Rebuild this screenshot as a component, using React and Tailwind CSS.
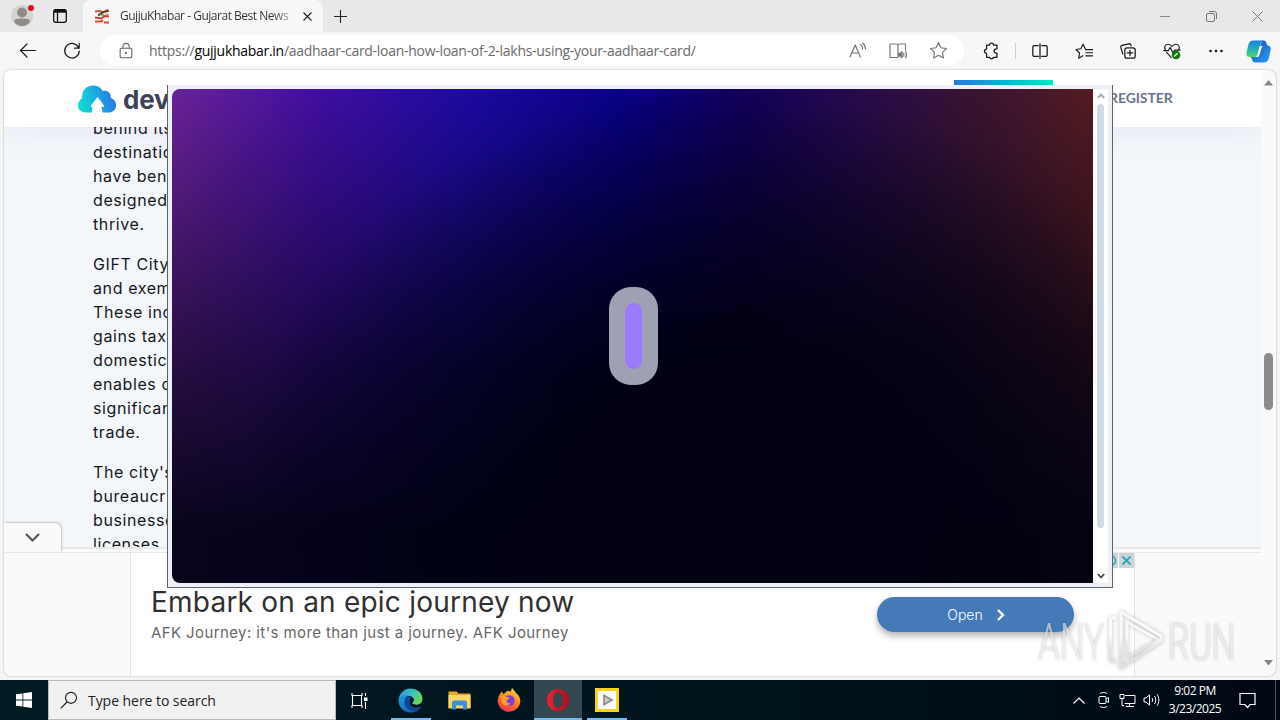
import clsx from "clsx";

const segoe = "font-['Open_Sans',sans-serif]";

const Icon = ({ size = 20, className, children }) => (
  <svg
    width={size}
    height={size}
    viewBox="0 0 20 20"
    fill="none"
    stroke="currentColor"
    strokeWidth="1.2"
    strokeLinecap="round"
    strokeLinejoin="round"
    className={clsx("shrink-0", className)}
  >
    {children}
  </svg>
);

const TabStrip = () => (
  <div className="flex h-8 bg-[#e8e8e8] text-[#1b1b1b]">
    <div className="flex w-[44px] items-center justify-center">
      <svg width="24" height="24" viewBox="0 0 24 24">
        <circle cx="12" cy="12" r="11" fill="#d6d4d2" />
        <circle cx="12" cy="8.5" r="5" fill="#8f8b88" />
        <path d="M4 17.500c0-1.800 2-3 8-3s8 1.200 8 3c-1.600 2.800-4.500 4.500-8 4.500s-6.400-1.700-8-4.500z" fill="#8f8b88" />
        <circle cx="21" cy="4" r="3" fill="#e00b1c" />
      </svg>
    </div>
    <div className="flex w-[39px] items-center pl-2">
      <svg width="16" height="16" viewBox="0 0 16 16" fill="none" stroke="#111" strokeWidth="1.3">
        <rect x="1.700" y="1.700" width="12.600" height="12.600" rx="2" />
        <path d="M2 3.200h12" strokeWidth="3" />
        <path d="M5.500 4v10" />
      </svg>
    </div>
    <div className="flex w-[240px] items-center rounded-t-lg bg-[#f7f7f7] pl-[11px]">
      <svg width="16" height="16" viewBox="0 0 16 16" fill="none">
        <path d="M1 3.500l5-.5 3 1.500 5-3" stroke="#cf5a45" strokeWidth="2" />
        <path d="M4 7.500l5-3.500 6-1" stroke="#5a2f2a" strokeWidth="1.600" />
        <path d="M1 9.500l6 1 4-2.500 4 .5" stroke="#c8402f" strokeWidth="2" />
        <path d="M6 6.500l4 .8" stroke="#4c8f68" strokeWidth="1.600" />
        <path d="M1 13.500h6l2-1.500M10 14.500h5" stroke="#d9482f" strokeWidth="2" />
        <path d="M11 6l4 .5" stroke="#e8a08e" strokeWidth="1.500" />
      </svg>
      <span
        className={clsx(
          segoe,
          "ml-[10px] w-[173px] whitespace-nowrap bg-linear-to-r from-[#333] from-88% to-[#33333350] bg-clip-text text-xs tracking-[-0.48px] text-transparent",
        )}
      >
        GujjuKhabar - Gujarat Best News
      </span>
      <svg width="9" height="9" viewBox="0 0 9 9" stroke="#222" strokeWidth="1.100" className="ml-[10px]">
        <path d="M.5.5l8 8M8.500.5l-8 8" />
      </svg>
    </div>
    <div className="flex w-[35px] items-center justify-center">
      <svg width="13" height="13" viewBox="0 0 13 13" stroke="#222" strokeWidth="1.100">
        <path d="M6.500 0v13M0 6.500h13" />
      </svg>
    </div>
    <div className="ml-auto flex text-[#777]">
      <div className="flex w-[46px] items-center justify-center">
        <span className="h-px w-[10px] bg-[#8a8a8a]" />
      </div>
      <div className="flex w-[46px] items-center justify-center">
        <svg width="11" height="11" viewBox="0 0 11 11" fill="none" stroke="currentColor">
          <rect x=".5" y="2.500" width="8" height="8" rx="1.500" />
          <path d="M3 .5h5.500a2 2 0 0 1 2 2v5.500" />
        </svg>
      </div>
      <div className="flex w-[46px] items-center justify-center">
        <svg width="11" height="11" viewBox="0 0 11 11" stroke="currentColor">
          <path d="M.5.5l10 10M10.500.5l-10 10" />
        </svg>
      </div>
    </div>
  </div>
);

const ToolButton = ({ children }) => (
  <div className="flex w-11 items-center justify-center">{children}</div>
);

const Toolbar = () => (
  <div className="flex h-[38px] bg-[#f7f7f7] text-[#1b1b1b]">
    <div className="flex w-[100px] pl-[6px]">
      <ToolButton>
        <Icon>
          <path d="M17.500 9.500h-15M9 3L2.500 9.500L9 16" />
        </Icon>
      </ToolButton>
      <ToolButton>
        <Icon>
          <path d="M16.800 7A7.300 7.300 0 1 0 17.300 10M17.200 2.500v4.700h-4.700" />
        </Icon>
      </ToolButton>
    </div>
    <div className="mt-[3px] flex h-[31px] w-[864px] items-center rounded-full bg-white pl-[17px]">
      <Icon size={18} className="text-[#666]">
        <rect x="3.500" y="7" width="13" height="10.500" rx="1.500" />
        <path d="M6.500 7V5a3.500 3.500 0 0 1 7 0v2" />
        <circle cx="10" cy="12.200" r=".6" fill="currentColor" />
      </Icon>
      <span className={clsx(segoe, "ml-[14px] mt-px w-[685px] whitespace-nowrap text-sm tracking-[-0.285px] text-[#6b6b6b]")}>
        https://<span className="text-black">gujjukhabar.in</span>
        /aadhaar-card-loan-how-loan-of-2-lakhs-using-your-aadhaar-card/
      </span>
      <div className="flex text-[#777]">
        <div className="flex w-10 justify-center pl-2">
          <Icon>
            <path d="M2 16L7.200 4l5.200 12M4 12h6.500M12.500 3.500c1.500 1 2 2.500 2 4.500M14.500 2c2 1.500 3 3.500 3 6" />
          </Icon>
        </div>
        <div className="flex w-10 justify-center pl-2">
          <Icon>
            <path d="M10 3.500v13M9 16.500H2V3h6c1.200 0 2 .5 2 1.200C10 3.500 10.800 3 12 3h5.500v6" />
            <path d="M10.500 12.500h1.500l2-1.800v6l-2-1.700h-1.500z" fill="currentColor" />
            <path d="M15.800 12v3.500M17.800 10.500c.8 2 .8 4.500 0 6.500" />
          </Icon>
        </div>
        <div className="flex w-10 justify-center pl-2">
          <Icon size={19}>
            <path d="M10 1.800l2.600 5.300 5.800.8-4.200 4.100 1 5.800-5.200-2.800-5.200 2.800 1-5.800-4.200-4.100 5.800-.8z" />
          </Icon>
        </div>
      </div>
    </div>
    <div className="flex pb-[6px] pl-[6px]">
      <ToolButton>
        <Icon size={18} className="translate-y-[3px]">
          <path
            d="M4 3.500h3.200a2.300 2.300 0 0 1 4.600 0H15.500v4.200h-.7a2.400 2.400 0 0 0 0 4.800h.7v4.500h-3.800a2.300 2.300 0 0 1-4.400 0H4v-4.300a2.400 2.400 0 1 1 0-4.800z"
            strokeWidth="1.400"
          />
        </Icon>
      </ToolButton>
      <div className="ml-px mr-[2px] mt-[11px] h-4 w-px bg-[#cfcfcf]" />
      <ToolButton>
        <Icon size={18} className="translate-y-[3px]">
          <path d="M8 4H3.500A1.500 1.500 0 0 0 2 5.500v9A1.500 1.500 0 0 0 3.500 16H8M12 4h4.500A1.500 1.500 0 0 1 18 5.500v9a1.500 1.500 0 0 1-1.500 1.500H12M10 2v16" strokeWidth="1.400" />
        </Icon>
      </ToolButton>
      <ToolButton>
        <Icon size={19} className="translate-y-[3px]">
          <path d="M10.800 7.200L8.500 2.300 6.200 7.100l-5.200.8 3.800 3.700-.9 5.400L8.300 14.600M11 8h7.500M11.500 11.300h7M11.500 14.600h7" />
        </Icon>
      </ToolButton>
      <ToolButton>
        <Icon size={18} className="translate-y-[3px]">
          <rect x="6.500" y="6.500" width="11.500" height="11.500" rx="2.500" strokeWidth="1.400" />
          <path d="M12.200 9.200v6M9.200 12.200h6M4.200 13.500L2 6A2 2 0 0 1 3.300 3.700L11 2a2 2 0 0 1 2.300 1.500l.3.900" strokeWidth="1.400" />
        </Icon>
      </ToolButton>
      <ToolButton>
        <Icon size={18} className="translate-y-[3px]">
          <path d="M2.500 8.500C.8 5 3 2.500 5.500 2.500c2 0 3.500 1 4.500 2.500 1-1.500 2.500-2.500 4.500-2.500 2.500 0 4.500 2.500 3.200 5.500M4 11.500l5 5.500M1 9.500h5l2-3.500 3 6 2-3h6" strokeWidth="1.300" />
          <circle cx="14.500" cy="14.500" r="4.800" fill="#107c10" stroke="none" />
          <path d="M12.500 15.800l3.500-3" stroke="white" />
        </Icon>
      </ToolButton>
      <ToolButton>
        <Icon className="translate-y-[3px]">
          <g fill="currentColor" stroke="none">
            <circle cx="4.500" cy="10" r="1.300" />
            <circle cx="10" cy="10" r="1.300" />
            <circle cx="15.500" cy="10" r="1.300" />
          </g>
        </Icon>
      </ToolButton>
      <div className="flex w-10 items-center justify-center">
        <svg width="25" height="23" viewBox="0 0 25 23" className="translate-y-[3px]">
          <defs>
            <linearGradient id="copA" x1="0" y1="0" x2="0" y2="1">
              <stop offset="0" stopColor="#1780e0" />
              <stop offset=".5" stopColor="#1fb0b8" />
              <stop offset="1" stopColor="#52d86a" />
            </linearGradient>
            <linearGradient id="copB" x1="0" y1="0" x2="1" y2="1">
              <stop offset="0" stopColor="#184fae" />
              <stop offset="1" stopColor="#2a9ff5" />
            </linearGradient>
          </defs>
          <path d="M16 .5h1.500c2 0 2.800 1.500 3.200 3.200.3 1.300 1 1.800 2 2 1.800.5 2.300 2.300 1.900 4.500l-1.800 8c-.7 3-2.300 4.300-5 4.300H9.500c-2.200 0-3-1.300-3.500-3.300-.3-1-.8-1.700-1.500-2.200h4c1.600 0 2.200-1 2.600-2.500z" fill="url(#copB)" />
          <path d="M7.500.5h9.800c-1.500.3-2.300 1.600-2.800 3.500L11.800 13c-.6 2.600-1.700 4-4 4H3.500C.8 17 0 15 .6 12.500l1.700-7.700C3 2 4.800.5 7.500.5z" fill="url(#copA)" />
          <path d="M14.200 6h3.200c-1 0-1.500 1-2 2.500l-1.700 6c-.5 1.500-1 2.300-2.200 2.500H9.700c1-.5 1.400-1.300 1.800-2.500l1.500-6c.3-1.200.5-2 1.200-2.500z" fill="#eefaff" />
        </svg>
      </div>
    </div>
  </div>
);

const article = [
  ["behind its", "destination", "have ben", "designed", "thrive."],
  ["GIFT City", "and exem", "These inc", "gains tax", "domestic", "enables c", "significan", "trade."],
  ["The city's", "bureaucr", "businesse", "licenses, a"],
];

const Site = () => (
  <div className="flex h-[477px] flex-col overflow-hidden bg-[#f4f7fa]">
    <div className="z-10 flex h-[57px] shrink-0 bg-white shadow-[0_10px_30px_rgba(90,90,180,0.07)]">
      <div className="flex items-start pl-[74px] pt-[15px]">
        <svg width="39" height="28" viewBox="0 0 39 28">
          <defs>
            <linearGradient id="cloud" x1="0" y1=".7" x2="1" y2=".5">
              <stop offset="0" stopColor="#0fe0d0" />
              <stop offset="1" stopColor="#2a72ec" />
            </linearGradient>
          </defs>
          <path
            d="M8 27.500C3 27.500 0 24.500 0 20.500c0-3 1.500-5.500 4-7C3.500 5.500 8.500.5 15 .5c4.500 0 8 2 9.800 5.500 4.500-.8 8.500 2 8 7 3.500 1.500 5.500 4 5.200 8-.4 4-3.200 6.500-7.500 6.500h-6l-1-5.500c2 .3 3 0 2.500-1.500L19.500 12l-6.500 8.500c-.5 1.500 0 2 1.500 1.500l-.5 5.500z"
            fill="url(#cloud)"
          />
        </svg>
        <span className="ml-[6px] font-[Inter,sans-serif] text-[26px] font-bold leading-[30px] tracking-[-0.2px] text-[#3d4257]">
          dev
        </span>
      </div>
      <div className="ml-auto flex">
        <div className="mt-[10px] h-[5px] w-[99px] bg-linear-to-r from-[#2577dc] to-[#0be4c4]" />
        <span className="ml-[56px] mt-[18px] w-[152px] font-[Lato,sans-serif] text-[14px] font-bold leading-5 tracking-[-0.08px] text-[#6a7391]">
          REGISTER
        </span>
      </div>
    </div>
    <div className="-mt-[11px] flex flex-col gap-4 pl-[89px] font-[Inter,sans-serif] text-[16px] leading-6 text-[#16181d]">
      {article.map((lines, i) => (
        <div key={i}>
          {lines.map((line) => (
            <p key={line} className="whitespace-nowrap tracking-[0.6px]">
              {line}
            </p>
          ))}
        </div>
      ))}
    </div>
  </div>
);

const AdBanner = () => (
  <div className="flex h-[129px] flex-col bg-[#fafafa]">
    <div className="h-[6px] border-t-2 border-b border-t-[#e6e8ea] border-b-[#e9e9e9]" />
    <div className="flex grow">
      <div className="w-[126px]" />
      <div className="relative flex w-[1005px] justify-between border-x border-[#e3e3e3] bg-white">
        <div className="pl-5 pt-[32px] font-[Inter,sans-serif]">
          <h2 className="whitespace-nowrap text-[28px] leading-[34px] tracking-[0.22px] text-[#303030]">
            Embark on an epic journey now
          </h2>
          <p className="mt-[4px] whitespace-nowrap text-[15px] leading-5 tracking-[0.4px] text-[#686868]">
            AFK Journey: it's more than just a journey. AFK Journey
          </p>
        </div>
        <div className="mr-[60px] mt-[44px] flex h-[35px] w-[197px] items-center justify-center rounded-full bg-[#457ab8] pl-px text-white shadow-[0_4px_7px_rgba(0,0,0,0.3)]">
          <span className="font-[Inter,sans-serif] text-[14px] font-light">Open</span>
          <svg width="8" height="12" viewBox="0 0 8 12" fill="none" stroke="white" strokeWidth="2.400" className="ml-[14px]">
            <path d="M1 1l5 5-5 5" />
          </svg>
        </div>
        <div className="absolute right-0 top-0 flex gap-px">
          <div className="h-[15px] w-[15px] bg-[#ccd3d6] pl-[3px]">
            <svg width="12" height="15" viewBox="0 0 12 15" fill="none" stroke="#25a4ba" strokeWidth="1.500">
              <circle cx="5" cy="7.500" r="4.500" />
            </svg>
          </div>
          <div className="flex h-[15px] w-[15px] items-center justify-center bg-[#ccd3d6]">
            <svg width="9" height="9" viewBox="0 0 9 9" stroke="#25a4ba" strokeWidth="1.700">
              <path d="M.5.5l8 8M8.500.5l-8 8" />
            </svg>
          </div>
        </div>
      </div>
    </div>
  </div>
);

const Popup = () => (
  <div className="absolute left-[167px] top-[85px] z-20 flex h-[503px] w-[946px] border border-t-0 border-[#5c6468] bg-[#edf0f7] p-1">
    <div className="flex h-[494px] w-[921px] items-center justify-center rounded-l-lg bg-[radial-gradient(ellipse_54%_84%_at_61%_84%,#000010_30%,#00001000),linear-gradient(180deg,#00021000,#00021066_35%,#000210a6_58%,#000210eb_90%),linear-gradient(90deg,#6a2298_0%,#400ea0_16%,#1c0aa0_32%,#080084_49%,#12005c_62%,#260a4c_74%,#3a1430_88%,#541b22_100%)] pl-px">
      <div className="flex h-[98px] w-[49px] items-center justify-center rounded-[22px] bg-[#a0a0b4]">
        <div className="h-[66px] w-[17px] rounded-full bg-[#9a7bff]" />
      </div>
    </div>
    <div className="flex h-[494px] w-[15px] flex-col items-center bg-white py-1">
      <svg width="8" height="6" viewBox="0 0 8 6" fill="none" stroke="#b5aeb0" strokeWidth="2">
        <path d="M.8 5L4 1.500 7.200 5" />
      </svg>
      <div className="mt-[5px] h-[424px] w-[7px] rounded-full bg-[#d0dbe5]" />
      <svg width="8" height="6" viewBox="0 0 8 6" fill="none" stroke="#444" strokeWidth="1.800" className="mt-auto">
        <path d="M.8 1L4 4.500 7.200 1" />
      </svg>
    </div>
  </div>
);

const Watermark = () => (
  <div className="absolute left-[1038px] top-[608px] z-30 flex h-16 w-[196px] items-center justify-between font-[Roboto,sans-serif] text-[51px] font-light leading-none text-white/60 [text-shadow:0_0_3px_rgba(0,0,0,0.25)]">
    <span className="w-[66px] origin-left translate-y-[2px] scale-x-[0.68] whitespace-nowrap">ANY</span>
    <svg width="58" height="64" viewBox="0 0 58 64" fill="none" className="drop-shadow-[0_0_2px_rgba(0,0,0,0.3)]">
      <defs>
        <linearGradient id="mark" x1="0" y1="0" x2="0" y2="1">
          <stop offset=".4" stopColor="white" />
          <stop offset=".75" stopColor="#e2e2e2" />
        </linearGradient>
      </defs>
      <g stroke="url(#mark)" strokeOpacity=".85" strokeLinejoin="round">
        <path d="M9 9L3.500 11v41l5.500 2" strokeWidth="3" />
        <path d="M14 4v52M14 4l40 24v5L14 60v-8" strokeWidth="3" />
        <path d="M20 50V14l32 18z" strokeWidth="2.500" />
      </g>
    </svg>
    <span className="w-[66px] origin-left translate-y-[2px] scale-x-[0.66] whitespace-nowrap">RUN</span>
  </div>
);

const TaskApp = ({ active, open, children }) => (
  <div
    className={clsx(
      "flex h-10 flex-col items-center border-b-2",
      active ? "ml-px w-12 border-[#76b9ed] bg-[#334850]" : "w-[49px] border-transparent",
    )}
  >
    <div className="flex h-[38px] shrink-0 items-center pt-[2px]">{children}</div>
    {open && <div className="h-[2px] w-10 shrink-0 bg-[#76b9ed]" />}
  </div>
);

const Taskbar = () => (
  <div className="flex h-10 bg-linear-to-r from-[#001a22] via-[#00141c] via-60% to-[#000814] text-white">
    <div className="flex w-12 items-center justify-center">
      <svg width="16" height="16" viewBox="0 0 16 16" fill="white">
        <path d="M0 2.300l6.500-.9v6.200H0zM7.300 1.300L16 0v7.600H7.300zM0 8.400h6.500v6.200L0 13.700zM7.300 8.400H16V16l-8.700-1.300z" />
      </svg>
    </div>
    <div className="flex w-[288px] items-center border border-[#b9b9b9] bg-[#f1f1f1] pl-[11px] text-[#222]">
      <svg width="18" height="18" viewBox="0 0 18 18" fill="none" stroke="#222" strokeWidth="1.200">
        <circle cx="11" cy="6.800" r="5.500" />
        <path d="M7 11l-6.300 6.300" />
      </svg>
      <span className={clsx(segoe, "ml-[10px] mt-[1px] whitespace-nowrap text-[14px] tracking-[-0.05px]")}>
        Type here to search
      </span>
    </div>
    <div className="flex w-[50px] items-center justify-center pr-[3px]">
      <svg width="17" height="17" viewBox="0 0 17 17" fill="none" stroke="white" strokeWidth="1.100">
        <path d="M1 1v2.500h10V1M1 16v-2.500h10V16M1.500 3.500v10M10.500 3.500v10M14.500 1v3M14.500 10v7" />
        <rect x="13.500" y="6" width="2.500" height="2.500" fill="white" />
      </svg>
    </div>
    <TaskApp open>
      <svg width="25" height="25" viewBox="0 0 24 24">
        <defs>
          <linearGradient id="edgeTop" x1="0" y1="0" x2="1" y2=".5">
            <stop offset="0" stopColor="#2390d8" />
            <stop offset=".6" stopColor="#38c4b8" />
            <stop offset="1" stopColor="#6ad85a" />
          </linearGradient>
          <linearGradient id="edgeLow" x1="0" y1="0" x2="1" y2="1">
            <stop offset="0" stopColor="#1b9de2" />
            <stop offset="1" stopColor="#0f57ad" />
          </linearGradient>
        </defs>
        <path d="M.5 11C1.500 4.500 6.500.5 12 .5c6.500 0 11.500 4.500 11.500 10 0 3.500-2.800 5.500-6 5.500-3 0-4.500-1-3-2.500 2.500-3-1-6-5-6-4 0-7 1.500-9 3.500z" fill="url(#edgeTop)" />
        <path d="M.5 11c2-3.500 6-5 9.500-3.500C7 9 6 12 7 15c1.500 4.500 7.500 6.500 15 3-2.500 4-6 5.600-10 5.600C5.500 23.600 0 18 .5 11z" fill="url(#edgeLow)" />
        <path d="M10 8c-4 1.500-5 7-2 11 2.500 3 7 4 10 3 2-1 3.500-2.500 4.200-4-5.200 2-9.200 0-10.700-3-.8-2 .5-3.500.5-5 0-1-.8-1.800-2-2z" fill="#0b4a92" />
      </svg>
    </TaskApp>
    <TaskApp>
      <svg width="23" height="20" viewBox="0 0 23 20">
        <path d="M.5 1.500h8l2 2h12V18H.5z" fill="#e8a92e" />
        <path d="M.5 5h22v13.500H.5z" fill="#fbd76a" />
        <path d="M4 19.500v-7a2 2 0 0 1 2-2h11a2 2 0 0 1 2 2v7h-4v-4H8v4z" fill="#3f8fd0" />
      </svg>
    </TaskApp>
    <TaskApp>
      <svg width="24" height="24" viewBox="0 0 24 24">
        <defs>
          <linearGradient id="fox" x1=".8" y1="0" x2=".3" y2="1">
            <stop offset="0" stopColor="#ffe14a" />
            <stop offset=".45" stopColor="#ff8a1f" />
            <stop offset="1" stopColor="#f02c55" />
          </linearGradient>
        </defs>
        <path d="M3 6l1.500-2.500L6.500 6l3-2.500C10.500 2.500 12 2 13.500 4L15 0c2 2 3 3.500 4 5 3 2 4.300 5 4.300 8A11.200 11.200 0 0 1 12 23.800 11.200 11.200 0 0 1 .8 13C.8 10 1.500 8 3 6z" fill="url(#fox)" />
        <circle cx="12.500" cy="12.500" r="5.200" fill="#7a3fd6" />
        <path d="M3 8c3-1 5 0 6.500 1 2 0 3 .5 3 1.500-1 1-3 1-3 2.500s2 2.500 4 2c-2 3.500-7 3-8.500 0C4 13 4 11 3 8z" fill="#ff9a22" />
      </svg>
    </TaskApp>
    <TaskApp active>
      <svg width="24" height="24" viewBox="0 0 24 24">
        <defs>
          <linearGradient id="opera" x1="0" y1="0" x2="1" y2="0">
            <stop offset="0" stopColor="#f31f33" />
            <stop offset="1" stopColor="#a8101c" />
          </linearGradient>
        </defs>
        <path
          d="M12 1a11 11 0 1 0 0 22 11 11 0 1 0 0-22zM12 4c2.800 0 4.800 3.500 4.800 8s-2 8-4.800 8-4.800-3.500-4.800-8S9.200 4 12 4z"
          fill="url(#opera)"
          fillRule="evenodd"
        />
      </svg>
    </TaskApp>
    <TaskApp open>
      <svg width="24" height="24" viewBox="0 0 24 24">
        <rect x="1.500" y="1.500" width="21" height="21" fill="#fbfbfb" stroke="#fcd21c" strokeWidth="3" />
        <path d="M9 7.500v9l8-4.500z" fill="#c8c8c8" stroke="#8e8e8e" strokeWidth="1.700" />
      </svg>
    </TaskApp>
    <div className="ml-auto flex items-center">
      <svg width="12" height="7" viewBox="0 0 12 7" fill="none" stroke="white" strokeWidth="1.200">
        <path d="M.5 6.500L6 1l5.500 5.500" />
      </svg>
      <svg width="12" height="16" viewBox="0 0 12 16" fill="none" stroke="white" className="ml-[13px]">
        <rect x="1" y="4.500" width="7" height="7" rx="1" />
        <path d="M8 7l2.500-1.500v5L8 9M2 1.500c2-1.300 5-1.300 7 0M2 14.500c2 1.300 5 1.300 7 0" />
      </svg>
      <svg width="17" height="15" viewBox="0 0 17 15" fill="none" stroke="white" className="ml-[9px]">
        <path d="M6 2.500h10v8H5.500M10.500 10.500v3M7 13.500h8M1 1.500h4v4H1zM3 5.500v7h2" />
      </svg>
      <svg width="17" height="14" viewBox="0 0 17 14" fill="none" stroke="white" className="ml-[7px]">
        <path d="M1 5h2l3.500-3v10L3 9H1zM9 5c.8 1.200.8 2.800 0 4M11.500 3c1.700 2.400 1.700 5.600 0 8M14 1.200c2.500 3.500 2.500 8 0 11.600" />
      </svg>
      <div className={clsx(segoe, "ml-[8px] flex w-[54px] flex-col items-center whitespace-nowrap text-[12px] leading-[18px] tracking-[-0.5px]")}>
        <span>9:02 PM</span>
        <span>3/23/2025</span>
      </div>
      <svg width="17" height="17" viewBox="0 0 17 17" fill="none" stroke="white" strokeWidth="1.200" className="ml-[17px]">
        <path d="M1 1.500h15v11h-5l-2.500 3-2.500-3H1z" />
      </svg>
      <div className="ml-[19px] mr-1 h-10 w-px bg-[#4a5560]" />
    </div>
  </div>
);

const App = () => {
  return (
    <div className="relative flex h-[720px] w-[1280px] flex-col overflow-hidden bg-[#f5f5f5]">
      <TabStrip />
      <Toolbar />
      <div className="flex h-[610px] px-1 pb-1">
        <div className="flex w-[1272px] overflow-hidden rounded-lg bg-[#fafafa] shadow-[0_0_2px_rgba(0,0,0,0.35)]">
          <div className="relative w-[1257px]">
            <Site />
            <AdBanner />
            <div className="absolute left-0 top-[453px] flex h-[29px] w-[57px] items-center justify-center rounded-tr-md bg-[#fafafa] shadow-[1px_-1px_2px_rgba(0,0,0,0.2)]">
              <svg width="15" height="9" viewBox="0 0 15 9" fill="none" stroke="#555" strokeWidth="2" className="mr-px">
                <path d="M1 1l6.500 6.500L14 1" />
              </svg>
            </div>
          </div>
          <div className="flex w-[15px] flex-col items-center py-[10px]">
            <svg width="9" height="6" viewBox="0 0 9 6" fill="#858585">
              <path d="M4.500 0L9 5.500H0z" />
            </svg>
            <div className="mt-[267px] h-[57px] w-[9px] rounded-full bg-[#8b8b8b]" />
            <svg width="9" height="6" viewBox="0 0 9 6" fill="#858585" className="mt-auto">
              <path d="M4.500 5.500L9 0H0z" />
            </svg>
          </div>
        </div>
      </div>
      <Taskbar />
      <Popup />
      <Watermark />
    </div>
  );
};

export default App;
